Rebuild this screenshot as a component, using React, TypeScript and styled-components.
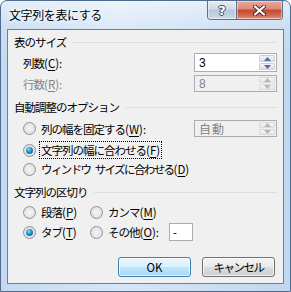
import React from 'react';
import styled, { createGlobalStyle } from 'styled-components';

const Global = createGlobalStyle`
  html, body { margin: 0; padding: 0; background: #fff; }
  body {
    font-family: "Noto Sans CJK JP", "Noto Sans", sans-serif;
    font-size: 12px;
    color: #000;
  }
  u { text-underline-offset: 2px; }
`;

const Window = styled.div`
  width: 291px;
  height: 292px;
  box-sizing: border-box;
  border: 1px solid #4f6b8f;
  border-radius: 7px 7px 0 0;
  background:
    linear-gradient(180deg, rgba(255,255,255,0.55) 0, rgba(255,255,255,0.15) 28px, rgba(255,255,255,0) 60px),
    linear-gradient(90deg, #c4d9f0 0%, #d6e6f7 40%, #c1d7ef 100%);
  display: flex;
  flex-direction: column;
  padding: 0 6px 7px 6px;
  overflow: hidden;
`;

const TitleBar = styled.div`
  height: 28px;
  display: flex;
  align-items: flex-start;
  flex-shrink: 0;
`;

const Title = styled.div`
  padding: 6px 0 0 2px;
  font-size: 12px;
  letter-spacing: -0.4px;
  line-height: 16px;
  text-shadow: 0 0 6px #fff, 0 0 3px #fff;
`;

const CaptionButtons = styled.div`
  margin-left: auto;
  margin-right: 1px;
  display: flex;
  height: 18px;
  border: 1px solid #5c6f86;
  border-top: none;
  border-radius: 0 0 4px 4px;
  overflow: hidden;
`;

const CaptionButton = styled.div<{ $close?: boolean }>`
  width: ${p => (p.$close ? 45 : 28)}px;
  height: 18px;
  display: flex;
  align-items: center;
  justify-content: center;
  box-shadow: inset 0 0 0 1px rgba(255,255,255,0.45);
  background: ${p =>
    p.$close
      ? 'linear-gradient(180deg, #e9a99b 0%, #dc8a78 45%, #c6452c 50%, #d3705a 85%, #e6a08d 100%)'
      : 'linear-gradient(180deg, #e6edf4 0%, #cfdbe8 45%, #b7c8da 50%, #c3d3e4 85%, #d6e2ee 100%)'};
  & + & { border-left: 1px solid #5c6f86; }
`;

const HelpGlyph = styled.span`
  font-family: "DejaVu Sans", sans-serif;
  font-weight: bold;
  font-size: 13px;
  line-height: 13px;
  color: #fff;
  text-shadow: 1px 0 0 #3d4a5a, -1px 0 0 #3d4a5a, 0 1px 0 #3d4a5a, 0 -1px 0 #3d4a5a;
`;

const Client = styled.div`
  flex: 1;
  background: #f0f0f0;
  border: 1px solid #6a819d;
  padding: 4px 6px 0 6px;
  display: flex;
  flex-direction: column;
  font-size: 11.5px;
  letter-spacing: -1px;
`;

const GroupHeader = styled.div<{ $mt: number }>`
  display: flex;
  align-items: center;
  height: 16px;
  margin-top: ${p => p.$mt}px;
  line-height: 16px;
`;

const GroupLine = styled.div`
  flex: 1;
  height: 1px;
  margin-left: 6px;
  background: #d5dfe5;
`;

const Row = styled.div<{ $mt: number; $h: number }>`
  display: flex;
  align-items: center;
  height: ${p => p.$h}px;
  margin-top: ${p => p.$mt}px;
  padding-left: 9px;
  line-height: 16px;
`;

// mnemonic suffix like "(C):" keeps normal latin spacing
const Key = styled.span`
  letter-spacing: 0;
`;

const FieldLabel = styled.span<{ $disabled?: boolean }>`
  color: ${p => (p.$disabled ? '#838383' : '#000')};
`;

const SpinBox = styled.div<{ $disabled?: boolean }>`
  margin-left: auto;
  width: 83px;
  height: 100%;
  box-sizing: border-box;
  border: 1px solid #a9acb2;
  background: ${p => (p.$disabled ? '#f0f0f0' : '#fff')};
  display: flex;
  padding: 1px;
`;

const SpinValue = styled.div<{ $disabled?: boolean; $spaced?: boolean }>`
  flex: 1;
  padding-left: 3px;
  display: flex;
  align-items: center;
  color: ${p => (p.$disabled ? '#838383' : '#000')};
  font-family: ${p => (p.$spaced ? '"Noto Sans CJK JP", sans-serif' : '"Liberation Sans", sans-serif')};
  letter-spacing: ${p => (p.$spaced ? '1px' : '0')};
  font-size: 12px;
`;

const SpinButtons = styled.div`
  width: 16px;
  display: flex;
  flex-direction: column;
  gap: 1px;
`;

const SpinButton = styled.div<{ $disabled?: boolean }>`
  flex: 1;
  display: flex;
  align-items: center;
  justify-content: center;
  background: ${p =>
    p.$disabled
      ? 'linear-gradient(180deg, #f4f4f4, #e6e6e6)'
      : 'linear-gradient(180deg, #f3f3f3, #dedede)'};
  border: 1px solid ${p => (p.$disabled ? '#dadada' : '#cfcfcf')};
  border-radius: 1px;
`;

const RadioItem = styled.label<{ $w?: number }>`
  display: flex;
  align-items: center;
  gap: 4px;
  width: ${p => (p.$w ? `${p.$w}px` : 'auto')};
  flex-shrink: 0;
`;

const RadioCircle = styled.span<{ $checked?: boolean }>`
  width: 13px;
  height: 13px;
  box-sizing: border-box;
  border-radius: 50%;
  border: 1px solid #8f9295;
  background: radial-gradient(circle at 50% 50%, #f6f6f6 0%, #e6e6e6 55%, #cfd1d3 100%);
  display: flex;
  align-items: center;
  justify-content: center;
  flex-shrink: 0;
  &::after {
    content: '';
    display: ${p => (p.$checked ? 'block' : 'none')};
    width: 7px;
    height: 7px;
    border-radius: 50%;
    background: radial-gradient(circle at 40% 35%, #8be0ff 0%, #1d8ad0 45%, #0c4f86 100%);
  }
`;

const RadioText = styled.span<{ $focused?: boolean; $ls?: number }>`
  padding: 0 1px;
  outline: ${p => (p.$focused ? '1px dotted #000' : 'none')};
  outline-offset: 0;
  white-space: nowrap;
  ${p => (p.$ls !== undefined ? `letter-spacing: ${p.$ls}px;` : '')}
`;

const SmallInput = styled.div`
  width: 24px;
  height: 100%;
  box-sizing: border-box;
  border: 1px solid #a9acb2;
  background: #fff;
  padding-left: 3px;
  display: flex;
  align-items: center;
  font-family: "Liberation Sans", sans-serif;
  letter-spacing: 0;
`;

const ButtonRow = styled.div`
  display: flex;
  justify-content: flex-end;
  gap: 11px;
  margin-top: 16px;
  padding-right: 2px;
`;

const DialogButton = styled.div<{ $default?: boolean; $ls?: number }>`
  width: 73px;
  height: 20px;
  box-sizing: border-box;
  border-radius: 3px;
  border: 1px solid ${p => (p.$default ? '#3c7fb1' : '#707070')};
  box-shadow: inset 0 0 0 1px rgba(255,255,255,0.7);
  background: ${p =>
    p.$default
      ? 'linear-gradient(180deg, #eaf6fd 0%, #d9f0fc 50%, #bee6fd 50%, #a7d9f5 100%)'
      : 'linear-gradient(180deg, #f2f2f2 0%, #ebebeb 50%, #dddddd 50%, #cfcfcf 100%)'};
  display: flex;
  align-items: center;
  justify-content: center;
  font-size: 11.5px;
  letter-spacing: ${p => p.$ls ?? 0}px;
  line-height: 16px;
`;

const Arrow = ({ up, disabled }: { up?: boolean; disabled?: boolean }) => (
  <svg width="7" height="4" viewBox="0 0 7 4">
    <path
      d={up ? 'M0 4 L3.5 0 L7 4 Z' : 'M0 0 L3.5 4 L7 0 Z'}
      fill={disabled ? '#b8b8b8' : '#4a6fb5'}
    />
  </svg>
);

const Spin = ({ value, disabled, spaced }: { value: string; disabled?: boolean; spaced?: boolean }) => (
  <SpinBox $disabled={disabled}>
    <SpinValue $disabled={disabled} $spaced={spaced}>{value}</SpinValue>
    <SpinButtons>
      <SpinButton $disabled={disabled}><Arrow up disabled={disabled} /></SpinButton>
      <SpinButton $disabled={disabled}><Arrow disabled={disabled} /></SpinButton>
    </SpinButtons>
  </SpinBox>
);

const Radio = ({
  checked,
  focused,
  width,
  ls,
  children
}: React.PropsWithChildren<{ checked?: boolean; focused?: boolean; width?: number; ls?: number }>) => (
  <RadioItem $w={width}>
    <RadioCircle $checked={checked} />
    <RadioText $focused={focused} $ls={ls}>{children}</RadioText>
  </RadioItem>
);

const CloseGlyph = () => (
  <svg width="13" height="11" viewBox="0 0 13 11">
    <path d="M2 1.5 L11 9.5 M11 1.5 L2 9.5" stroke="#4a2a25" strokeWidth="4" strokeLinecap="round" />
    <path d="M2 1.5 L11 9.5 M11 1.5 L2 9.5" stroke="#fff" strokeWidth="2.2" strokeLinecap="round" />
  </svg>
);

export default function App() {
  return (
    <>
      <Global />
      <Window>
        <TitleBar>
          <Title>文字列を表にする</Title>
          <CaptionButtons>
            <CaptionButton><HelpGlyph>?</HelpGlyph></CaptionButton>
            <CaptionButton $close><CloseGlyph /></CaptionButton>
          </CaptionButtons>
        </TitleBar>
        <Client>
          <GroupHeader $mt={0}>
            表のサイズ<GroupLine />
          </GroupHeader>
          <Row $mt={3} $h={19}>
            <FieldLabel>列数<Key>(<u>C</u>):</Key></FieldLabel>
            <Spin value="3" />
          </Row>
          <Row $mt={3} $h={17}>
            <FieldLabel $disabled>行数<Key>(<u>R</u>):</Key></FieldLabel>
            <Spin value="8" disabled />
          </Row>

          <GroupHeader $mt={7}>
            自動調整のオプション<GroupLine />
          </GroupHeader>
          <Row $mt={5} $h={17}>
            <Radio>列の幅を固定する<Key>(<u>W</u>):</Key></Radio>
            <Spin value="自動" disabled spaced />
          </Row>
          <Row $mt={5} $h={16}>
            <Radio checked focused>文字列の幅に合わせる<Key>(<u>F</u>)</Key></Radio>
          </Row>
          <Row $mt={3} $h={16}>
            <Radio ls={-1.6}>ウィンドウ{'\u2002'}サイズに合わせる<Key>(<u>D</u>)</Key></Radio>
          </Row>

          <GroupHeader $mt={7}>
            文字列の区切り<GroupLine />
          </GroupHeader>
          <Row $mt={4} $h={16}>
            <Radio width={67}>段落<Key>(<u>P</u>)</Key></Radio>
            <Radio>カンマ<Key>(<u>M</u>)</Key></Radio>
          </Row>
          <Row $mt={3} $h={18}>
            <Radio width={67} checked>タブ<Key>(<u>T</u>)</Key></Radio>
            <Radio width={79}>その他<Key>(<u>O</u>):</Key></Radio>
            <SmallInput>-</SmallInput>
          </Row>

          <ButtonRow>
            <DialogButton $default>OK</DialogButton>
            <DialogButton $ls={-1.5}>キャンセル</DialogButton>
          </ButtonRow>
        </Client>
      </Window>
    </>
  );
}
